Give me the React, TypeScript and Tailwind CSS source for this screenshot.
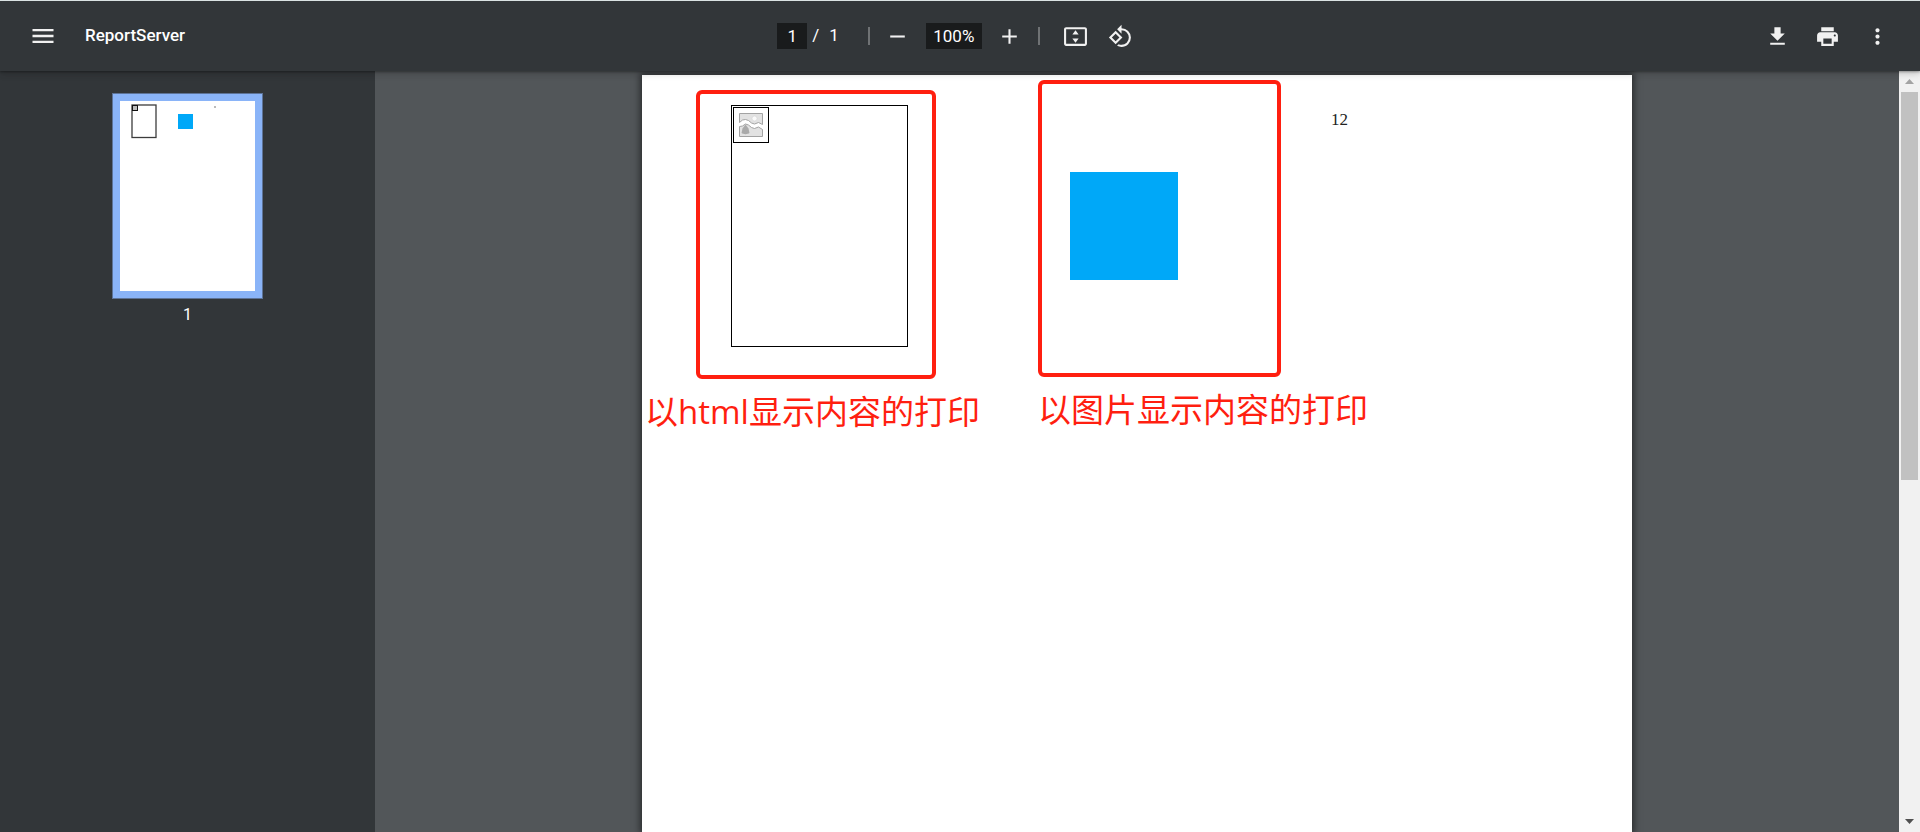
import React, { useState } from 'react';

interface IconProps {
    className?: string;
    d: string;
    viewBox?: string;
}

const ICONS = {
    menu: 'M3 6h18v2H3zM3 11h18v2H3zM3 16h18v2H3z',
    minus: 'M5 11h14v2H5z',
    plus: 'M19 13h-6v6h-2v-6H5v-2h6V5h2v6h6z',
    download: 'M19 9h-4V3H9v6H5l7 7 7-7zM5 18v2h14v-2H5z',
    print: 'M19 8H5c-1.66 0-3 1.34-3 3v6h4v4h12v-4h4v-6c0-1.66-1.34-3-3-3zm-3 11H8v-5h8v5zm3-7c-.55 0-1-.45-1-1s.45-1 1-1 1 .45 1 1-.45 1-1 1zm-1-9H6v4h12V3z',
    more: 'M12 8c1.1 0 2-.9 2-2s-.9-2-2-2-2 .9-2 2 .9 2 2 2zm0 2c-1.1 0-2 .9-2 2s.9 2 2 2 2-.9 2-2-.9-2-2-2zm0 6c-1.1 0-2 .9-2 2s.9 2 2 2 2-.9 2-2-.9-2-2-2z',
    fit: 'M21 3H3c-1.1 0-2 .9-2 2v14c0 1.1.9 2 2 2h18c1.1 0 2-.9 2-2V5c0-1.1-.9-2-2-2zm0 16H3V5h18v14zM12 6l-3 4h6zM12 18l-3-4h6z',
    rotate: 'M7.34 6.41L.86 12.9l6.49 6.48 6.49-6.48-6.5-6.49zM3.69 12.9l3.66-3.66L11 12.9l-3.66 3.66-3.65-3.66zm15.67-6.26A8.95 8.95 0 0 0 13 4V.76L8.76 5 13 9.24V6c1.79 0 3.58.68 4.95 2.05a7.007 7.007 0 0 1 0 9.9A6.973 6.973 0 0 1 13 20c-.97 0-1.94-.21-2.84-.61l-1.49 1.49C10.02 21.62 11.51 22 13 22c2.3 0 4.61-.88 6.36-2.64a8.98 8.98 0 0 0 0-12.72z',
};

const Icon = ({ className = 'size-[25px]', d, viewBox = '0 0 24 24' }: IconProps) => (
    <svg className={className} viewBox={viewBox} fill="currentColor" aria-hidden="true">
        <path d={d} />
    </svg>
);

const IconButton = ({ label, children }: { label: string; children: React.ReactNode }) => (
    <button
        type="button"
        aria-label={label}
        className="flex size-10 shrink-0 items-center justify-center rounded-full text-[#f1f1f1] hover:bg-white/10"
    >
        {children}
    </button>
);

const Separator = () => <div className="h-[18px] w-[2px] shrink-0 bg-[#6f7274]" />;

function Toolbar() {
    const [page, setPage] = useState('1');
    const [zoom, setZoom] = useState('100%');

    return (
        <header className="relative z-10 grid h-[71px] shrink-0 grid-cols-[1fr_auto_1fr] items-center border-t border-[#dbe3e3] bg-[#323639] text-[17px] text-white shadow-[0_1px_2px_rgba(0,0,0,0.3),0_2px_6px_rgba(0,0,0,0.15),0_4px_8px_rgba(0,0,0,0.06)]">
            <div className="flex items-center gap-[22px] pl-[23px]">
                <IconButton label="Menu">
                    <Icon className="size-7" d={ICONS.menu} />
                </IconButton>
                <h1 className="font-medium">ReportServer</h1>
            </div>

            <div className="flex items-center gap-2 pr-[2px]">
                <div className="mr-[21px] flex items-center whitespace-pre">
                    <input
                        aria-label="Page number"
                        className="h-[26px] w-[30px] bg-[#191b1c] text-center outline-none"
                        value={page}
                        onChange={(e) => setPage(e.target.value)}
                    />
                    <span className="ml-[5px]">/</span>
                    <span className="ml-[10px]">1</span>
                </div>
                <Separator />
                <IconButton label="Zoom out">
                    <Icon d={ICONS.minus} />
                </IconButton>
                <input
                    aria-label="Zoom level"
                    className="h-[26px] w-14 bg-[#191b1c] text-center outline-none"
                    value={zoom}
                    onChange={(e) => setZoom(e.target.value)}
                />
                <IconButton label="Zoom in">
                    <Icon d={ICONS.plus} />
                </IconButton>
                <Separator />
                <div className="ml-2 flex gap-[5px]">
                    <IconButton label="Fit to page">
                        <Icon d={ICONS.fit} />
                    </IconButton>
                    <IconButton label="Rotate counterclockwise">
                        <Icon d={ICONS.rotate} />
                    </IconButton>
                </div>
            </div>

            <div className="flex justify-end gap-[10px] pr-[23px]">
                <IconButton label="Download">
                    <Icon d={ICONS.download} />
                </IconButton>
                <IconButton label="Print">
                    <Icon d={ICONS.print} />
                </IconButton>
                <IconButton label="More actions">
                    <Icon d={ICONS.more} />
                </IconButton>
            </div>
        </header>
    );
}

function Sidebar() {
    return (
        <aside className="flex w-[375px] shrink-0 flex-col items-center bg-[#323639] pt-[22px]">
            <button type="button" aria-label="Page 1" className="border border-[#5d7397] bg-[#8ab4f8] p-[7px]">
                <svg className="h-[190px] w-[135px] bg-white" viewBox="0 0 135 190" aria-hidden="true">
                    <rect x="12" y="4" width="24" height="32.5" fill="none" stroke="#3c3c3c" strokeWidth="1.3" />
                    <rect x="12.5" y="4.5" width="5" height="5" fill="#bbb" stroke="#111" />
                    <rect x="58" y="13" width="15" height="15" fill="#00a8f8" />
                    <rect x="94" y="5" width="2" height="2" fill="#bbb" />
                </svg>
            </button>
            <span className="mt-1 text-base leading-6 text-white">1</span>
        </aside>
    );
}

const BrokenImage = () => (
    <div className="flex size-9 items-center justify-center border border-black">
        <svg className="size-6" viewBox="0 0 24 24" role="img" aria-label="Image not available">
            <path d="M.5.5h23v11l-4-2-4 1.5-3-1-3-2.5-3-1-3 .5-3 2.5z" fill="#e2e2e2" stroke="#a3a3a3" />
            <circle cx="15.5" cy="5.5" r="2.5" fill="#fafafa" stroke="#ccc" strokeWidth=".5" />
            <path d="M.5 13.5l3-.5 3-2 3 1 3 2.5 3 1 4-1.5 4 2.5v7h-23z" fill="#e2e2e2" stroke="#a3a3a3" />
            <path d="M6.5 11.5l3 4 1 4.5c-2 1.5-6 1.5-8 0l1-4.5z" fill="#aaa" />
        </svg>
    </div>
);

interface MarkedProps {
    className: string;
    caption: string;
    children: React.ReactNode;
}

// red outline with a caption underneath, the caption may be wider than the outline
function Marked({ className, caption, children }: MarkedProps) {
    return (
        <figure className="shrink-0">
            <div className={`rounded-md border-4 border-[#ff1f10] ${className}`}>{children}</div>
            <figcaption className="mt-[9px] whitespace-nowrap font-['Open_Sans','Noto_Sans_CJK_SC',sans-serif] text-[33px] leading-[48px] text-[#ff1f10]">
                {caption}
            </figcaption>
        </figure>
    );
}

function Document() {
    return (
        <article className="flex min-h-full w-[990px] shrink-0 items-start bg-white pl-[3px] shadow-[0_0_7px_2px_rgba(0,0,0,0.5)]">
            <div className="w-[393px] shrink-0 pt-[15px]">
                <Marked className="ml-[51px] h-[289px] w-[240px] pt-[11px] pl-[31px]" caption="以html显示内容的打印">
                    <div className="h-[242px] w-[177px] border border-black pt-px pl-px">
                        <BrokenImage />
                    </div>
                </Marked>
            </div>
            <div className="w-[244px] shrink-0 pt-[5px]">
                <Marked className="h-[297px] w-[243px] pt-[88px] pl-[28px]" caption="以图片显示内容的打印">
                    <div className="size-[108px] bg-[#00a8f8]" />
                </Marked>
            </div>
            <p className="ml-[49px] pt-[33px] font-['Liberation_Serif',serif] text-[17px] leading-6 text-[#222]">12</p>
        </article>
    );
}

function Scrollbar() {
    return (
        <div className="flex w-[21px] shrink-0 flex-col items-center justify-between bg-[#f1f1f1]" aria-hidden="true">
            <div className="flex h-[21px] items-center">
                <svg className="h-[5px] w-[9px]" viewBox="0 0 9 5">
                    <path d="M0 5L4.5 0 9 5z" fill="#a3a3a3" />
                </svg>
            </div>
            <div className="flex w-full grow flex-col items-center">
                <div className="h-[54%] w-[17px] bg-[#c1c1c1]" />
            </div>
            <div className="flex h-[21px] items-center">
                <svg className="h-[5px] w-[9px]" viewBox="0 0 9 5">
                    <path d="M0 0L4.5 5 9 0z" fill="#505050" />
                </svg>
            </div>
        </div>
    );
}

export default function App() {
    return (
        <div className="flex h-screen flex-col overflow-hidden font-['Roboto',sans-serif]">
            <Toolbar />
            <div className="flex min-h-0 grow">
                <Sidebar />
                <main className="flex min-w-0 grow justify-center overflow-hidden bg-[#525659] pt-1">
                    <Document />
                </main>
                <Scrollbar />
            </div>
        </div>
    );
}
